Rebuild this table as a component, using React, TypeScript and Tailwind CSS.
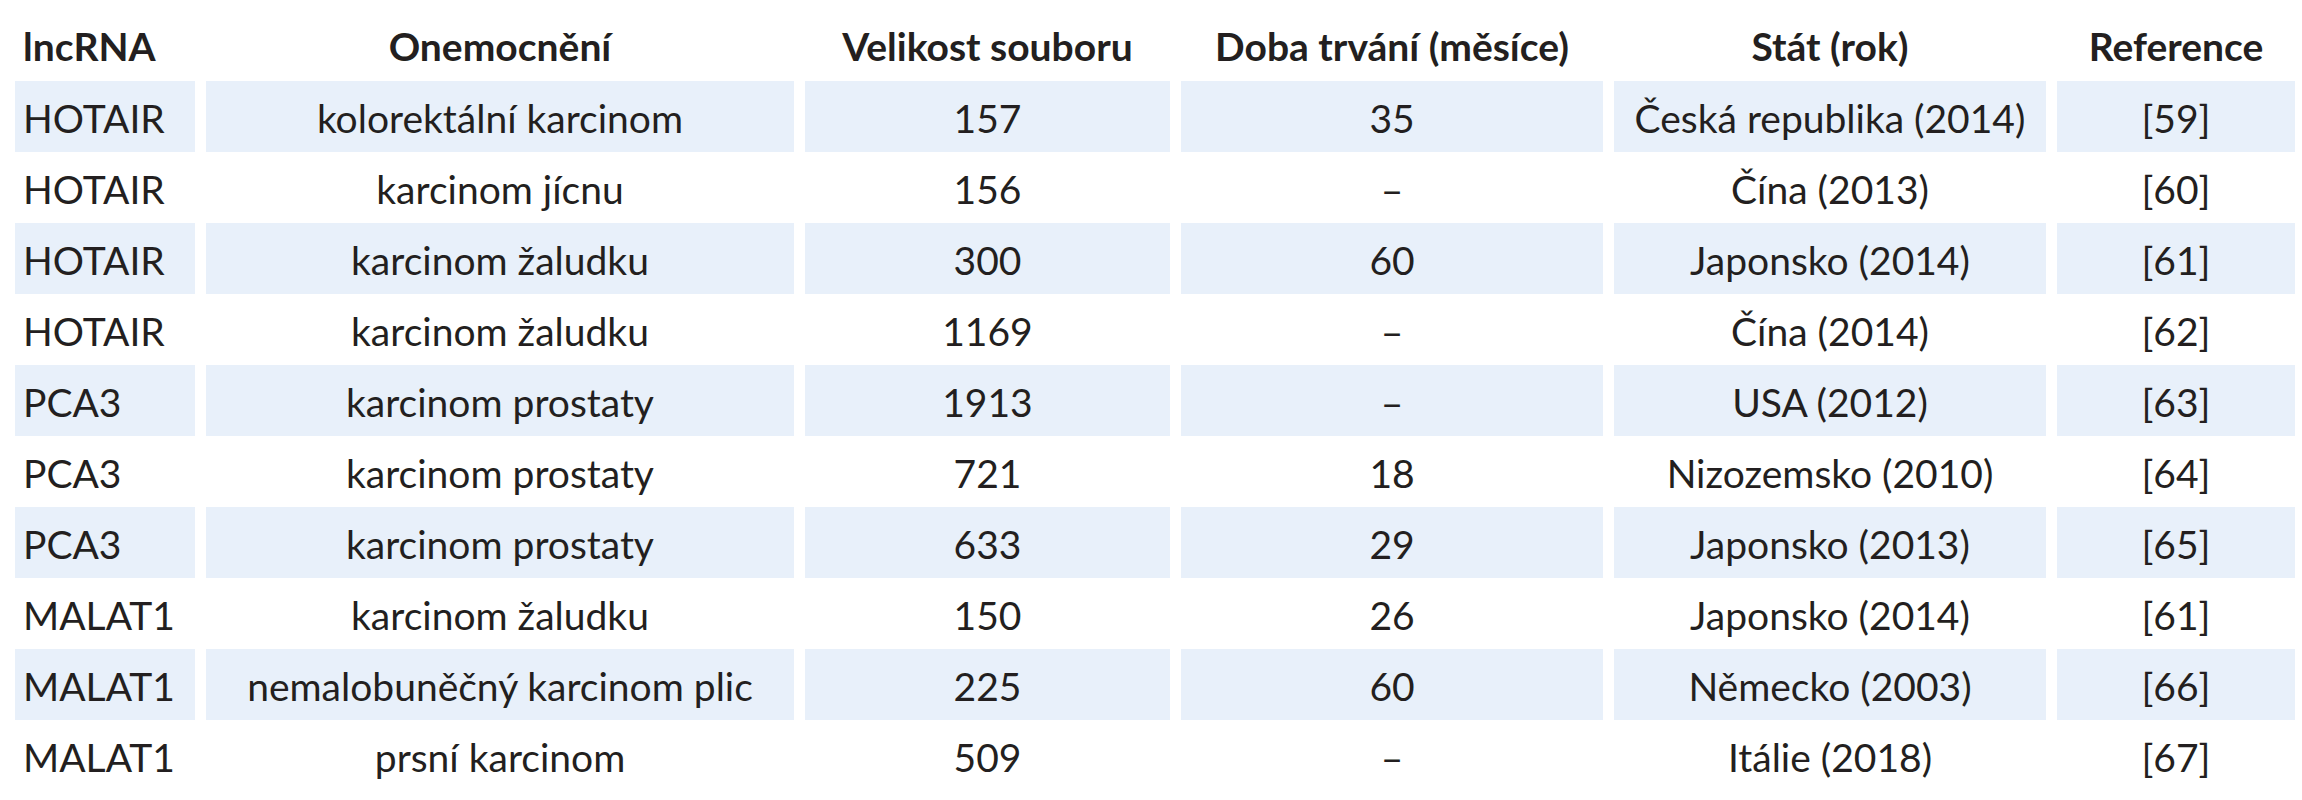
import React from 'react';

type Row = {
  rna: string;
  disease: string;
  size: string;
  months: string;
  country: string;
  ref: string;
};

const HEAD = ['lncRNA', 'Onemocnění', 'Velikost souboru', 'Doba trvání (měsíce)', 'Stát (rok)', 'Reference'];

const ROWS: Row[] = [
  { rna: 'HOTAIR', disease: 'kolorektální karcinom', size: '157', months: '35', country: 'Česká republika (2014)', ref: '[59]' },
  { rna: 'HOTAIR', disease: 'karcinom jícnu', size: '156', months: '–', country: 'Čína (2013)', ref: '[60]' },
  { rna: 'HOTAIR', disease: 'karcinom žaludku', size: '300', months: '60', country: 'Japonsko (2014)', ref: '[61]' },
  { rna: 'HOTAIR', disease: 'karcinom žaludku', size: '1169', months: '–', country: 'Čína (2014)', ref: '[62]' },
  { rna: 'PCA3', disease: 'karcinom prostaty', size: '1913', months: '–', country: 'USA (2012)', ref: '[63]' },
  { rna: 'PCA3', disease: 'karcinom prostaty', size: '721', months: '18', country: 'Nizozemsko (2010)', ref: '[64]' },
  { rna: 'PCA3', disease: 'karcinom prostaty', size: '633', months: '29', country: 'Japonsko (2013)', ref: '[65]' },
  { rna: 'MALAT1', disease: 'karcinom žaludku', size: '150', months: '26', country: 'Japonsko (2014)', ref: '[61]' },
  { rna: 'MALAT1', disease: 'nemalobuněčný karcinom plic', size: '225', months: '60', country: 'Německo (2003)', ref: '[66]' },
  { rna: 'MALAT1', disease: 'prsní karcinom', size: '509', months: '–', country: 'Itálie (2018)', ref: '[67]' },
];

// fixed column widths measured off the original table
const COLS = 'grid grid-cols-[180px_588px_365px_422px_432px_238px] gap-x-[11px]';

export default function App() {
  return (
    <div className="w-[2302px] h-[800px] bg-white pl-[15px] text-[#231f20] font-['Lato','Open_Sans',sans-serif] text-[39px] leading-none">
      {/* header */}
      <div className={`${COLS} h-[81px] items-end pb-[15px] font-bold`}>
        {HEAD.map((h, i) => (
          <div key={h} className={i === 0 ? 'pl-2' : 'text-center'}>
            {h}
          </div>
        ))}
      </div>

      {/* body */}
      {ROWS.map((r, idx) => {
        const cell = `flex items-center h-[71px] pt-[4px] ${idx % 2 === 0 ? 'bg-[#e8f0fa]' : ''}`;
        return (
          <div key={idx} className={COLS}>
            <div className={`${cell} pl-2`}>{r.rna}</div>
            <div className={`${cell} justify-center`}>{r.disease}</div>
            <div className={`${cell} justify-center`}>{r.size}</div>
            <div className={`${cell} justify-center`}>{r.months}</div>
            <div className={`${cell} justify-center`}>{r.country}</div>
            <div className={`${cell} justify-center`}>{r.ref}</div>
          </div>
        );
      })}
    </div>
  );
}
